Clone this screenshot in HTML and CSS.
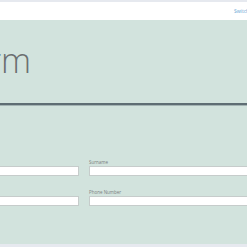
FILE: index.html
```html
<!DOCTYPE html>
<html>
<head>
<meta charset="utf-8">
<link rel="stylesheet" href="styles.css">
</head>
<body>
<header class="header"><a class="switch" href="#">Switch to English</a></header>
<main class="main">
  <div class="title-wrap"><h1 class="title">Registration Form</h1></div>
  <div class="rule"></div>
  <form class="form">
    <div class="field"><label class="label">First Name</label><input class="input" type="text"></div>
    <div class="field"><label class="label">Surname</label><input class="input" type="text"></div>
    <div class="field"><label class="label">Email</label><input class="input" type="text"></div>
    <div class="field"><label class="label">Phone Number</label><input class="input" type="text"></div>
  </form>
</main>
</body>
</html>
```
FILE: styles.css
```css
html, body {
  margin: 0;
  padding: 0;
}
body {
  background: #e6e9ef;
  font-family: "Open Sans", "Liberation Sans", sans-serif;
  overflow: hidden;
  padding-top: 2px;
}
.header {
  height: 18px;
  background: #ffffff;
  display: flex;
  align-items: center;
  padding-left: 234px;
  overflow: hidden;
  white-space: nowrap;
}
.switch {
  font-size: 5px;
  color: #5ea3d3;
  text-decoration: none;
}
.main {
  background: #d2e3dd;
  padding: 23px 0 38px;
  overflow: hidden;
}
.title-wrap {
  width: 31px;
  display: flex;
  justify-content: flex-end;
}
.title {
  margin: 0;
  font-size: 34px;
  line-height: 34px;
  font-weight: 300;
  color: #6b6f70;
  white-space: nowrap;
}
.rule {
  margin-top: 26px;
  border-top: 2px solid #5e6d73;
  box-shadow: 0 1px 0 #a3b3b3;
}
.form {
  margin: 54px 0 0 -91px;
  display: grid;
  grid-template-columns: 170px 170px;
  column-gap: 10px;
  row-gap: 13px;
}
.field {
  display: flex;
  flex-direction: column;
  gap: 1px;
}
.label {
  font-size: 4.5px;
  line-height: 6px;
  color: #7a7f80;
}
.input {
  box-sizing: border-box;
  height: 10px;
  margin: 0;
  padding: 0;
  border: 1px solid #c6cccb;
  background: #ffffff;
}
```
